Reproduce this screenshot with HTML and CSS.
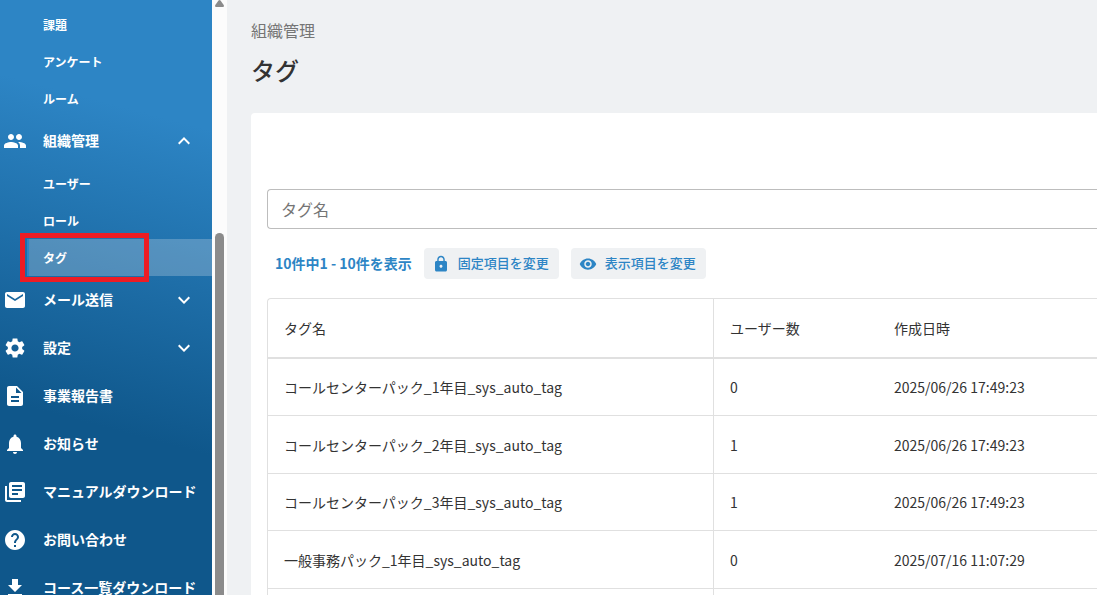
FILE: index.html
```html
<!DOCTYPE html>
<html lang="ja">
<head>
<meta charset="utf-8">
<meta name="viewport" content="width=device-width, initial-scale=1">
<title>タグ</title>
<link rel="stylesheet" href="styles.css">
</head>
<body>
<div class="layout">
  <nav class="sidebar">
    <ul class="menu">
      <li>
        <ul class="submenu">
          <li><a class="sub-link" href="#">課題</a></li>
          <li><a class="sub-link" href="#">アンケート</a></li>
          <li><a class="sub-link" href="#">ルーム</a></li>
        </ul>
      </li>
      <li>
        <button class="menu-link" type="button" aria-expanded="true">
          <svg class="icon" viewBox="0 0 24 24"><path d="M16 11c1.66 0 2.99-1.34 2.99-3S17.66 5 16 5c-1.66 0-3 1.34-3 3s1.34 3 3 3zm-8 0c1.66 0 2.99-1.34 2.99-3S9.66 5 8 5C6.34 5 5 6.34 5 8s1.34 3 3 3zm0 2c-2.33 0-7 1.17-7 3.5V19h14v-2.5c0-2.33-4.67-3.5-7-3.5zm8 0c-.29 0-.62.02-.97.05 1.16.84 1.97 1.97 1.97 3.45V19h6v-2.5c0-2.33-4.67-3.5-7-3.5z"/></svg>
          <span class="menu-label">組織管理</span>
          <svg class="icon" viewBox="0 0 24 24"><path d="M12 8l-6 6 1.41 1.41L12 10.83l4.59 4.58L18 14z"/></svg>
        </button>
        <ul class="submenu">
          <li><a class="sub-link" href="#">ユーザー</a></li>
          <li><a class="sub-link" href="#">ロール</a></li>
          <li class="current"><a class="sub-link sub-link-active" href="#" aria-current="page">タグ</a><span class="callout"></span></li>
        </ul>
      </li>
      <li>
        <button class="menu-link" type="button" aria-expanded="false">
          <svg class="icon" viewBox="0 0 24 24"><path d="M20 4H4c-1.1 0-1.99.9-1.99 2L2 18c0 1.1.9 2 2 2h16c1.1 0 2-.9 2-2V6c0-1.1-.9-2-2-2zm0 4l-8 5-8-5V6l8 5 8-5v2z"/></svg>
          <span class="menu-label">メール送信</span>
          <svg class="icon" viewBox="0 0 24 24"><path d="M16.59 8.59L12 13.17 7.41 8.59 6 10l6 6 6-6z"/></svg>
        </button>
      </li>
      <li>
        <button class="menu-link" type="button" aria-expanded="false">
          <svg class="icon" viewBox="0 0 24 24"><path d="M19.14 12.94c.04-.3.06-.61.06-.94 0-.32-.02-.64-.07-.94l2.03-1.58c.18-.14.23-.41.12-.61l-1.92-3.32c-.12-.22-.37-.29-.59-.22l-2.39.96c-.5-.38-1.03-.7-1.62-.94l-.36-2.54c-.04-.24-.24-.41-.48-.41h-3.84c-.24 0-.43.17-.47.41l-.36 2.54c-.59.24-1.13.57-1.62.94l-2.39-.96c-.22-.08-.47 0-.59.22L2.74 8.87c-.12.21-.08.47.12.61l2.03 1.58c-.05.3-.09.63-.09.94s.02.64.07.94l-2.03 1.58c-.18.14-.23.41-.12.61l1.92 3.32c.12.22.37.29.59.22l2.39-.96c.5.38 1.03.7 1.62.94l.36 2.54c.05.24.24.41.48.41h3.84c.24 0 .44-.17.47-.41l.36-2.54c.59-.24 1.13-.56 1.62-.94l2.39.96c.22.08.47 0 .59-.22l1.92-3.32c.12-.22.07-.47-.12-.61l-2.01-1.58zM12 15.6c-1.98 0-3.6-1.62-3.6-3.6s1.62-3.6 3.6-3.6 3.6 1.62 3.6 3.6-1.62 3.6-3.6 3.6z"/></svg>
          <span class="menu-label">設定</span>
          <svg class="icon" viewBox="0 0 24 24"><path d="M16.59 8.59L12 13.17 7.41 8.59 6 10l6 6 6-6z"/></svg>
        </button>
      </li>
      <li>
        <a class="menu-link" href="#">
          <svg class="icon" viewBox="0 0 24 24"><path d="M14 2H6c-1.1 0-1.99.9-1.99 2L4 20c0 1.1.89 2 1.99 2H18c1.1 0 2-.9 2-2V8l-6-6zm2 16H8v-2h8v2zm0-4H8v-2h8v2zm-3-5V3.500L18.500 9H13z"/></svg>
          <span class="menu-label">事業報告書</span>
        </a>
      </li>
      <li>
        <a class="menu-link" href="#">
          <svg class="icon" viewBox="0 0 24 24"><path d="M12 22c1.100 0 2-.9 2-2h-4c0 1.100.89 2 2 2zm6-6v-5c0-3.070-1.640-5.640-4.500-6.320V4c0-.83-.67-1.500-1.500-1.500s-1.500.67-1.500 1.500v.68C7.630 5.360 6 7.920 6 11v5l-2 2v1h16v-1l-2-2z"/></svg>
          <span class="menu-label">お知らせ</span>
        </a>
      </li>
      <li>
        <a class="menu-link" href="#">
          <svg class="icon" viewBox="0 0 24 24"><path d="M4 6H2v14c0 1.100.9 2 2 2h14v-2H4V6zm16-4H8c-1.100 0-2 .9-2 2v12c0 1.100.9 2 2 2h12c1.100 0 2-.9 2-2V4c0-1.100-.9-2-2-2zm-1 9H9V9h10v2zm-4 4H9v-2h6v2zm4-8H9V5h10v2z"/></svg>
          <span class="menu-label">マニュアルダウンロード</span>
        </a>
      </li>
      <li>
        <a class="menu-link" href="#">
          <svg class="icon" viewBox="0 0 24 24"><path d="M12 2C6.480 2 2 6.480 2 12s4.480 10 10 10 10-4.480 10-10S17.520 2 12 2zm1 17h-2v-2h2v2zm2.070-7.750l-.9.920C13.450 12.900 13 13.500 13 15h-2v-.5c0-1.100.45-2.100 1.170-2.830l1.240-1.260c.37-.36.59-.86.59-1.410 0-1.100-.9-2-2-2s-2 .9-2 2H8c0-2.210 1.790-4 4-4s4 1.790 4 4c0 .88-.36 1.680-.93 2.250z"/></svg>
          <span class="menu-label">お問い合わせ</span>
        </a>
      </li>
      <li>
        <a class="menu-link" href="#">
          <svg class="icon" viewBox="0 0 24 24"><path d="M19 9h-4V3H9v6H5l7 7 7-7zM5 18v2h14v-2H5z"/></svg>
          <span class="menu-label">コース一覧ダウンロード</span>
        </a>
      </li>
    </ul>
  </nav>
  <div class="scrollbar" aria-hidden="true">
    <svg class="scroll-arrow" viewBox="0 0 9 7"><path d="M3.500.6q1-1 2 0L8.700 5q.7 1.500-.7 2H1Q-.4 6.500.3 5z"/></svg>
    <span class="scroll-thumb"></span>
  </div>
  <main class="content">
    <p class="breadcrumb">組織管理</p>
    <h1 class="page-title">タグ</h1>
    <section class="card">
      <input class="search" type="text" placeholder="タグ名" aria-label="タグ名">
      <div class="toolbar">
        <span class="count">10件中1 - 10件を表示</span>
        <button class="chip" type="button">
          <svg class="chip-icon" viewBox="0 0 24 24"><path d="M18 8h-1V6c0-2.760-2.240-5-5-5S7 3.240 7 6v2H6c-1.100 0-2 .9-2 2v10c0 1.100.9 2 2 2h12c1.100 0 2-.9 2-2V10c0-1.100-.9-2-2-2zm-6 9c-1.100 0-2-.9-2-2s.9-2 2-2 2 .9 2 2-.9 2-2 2zm3.100-9H8.900V6c0-1.710 1.390-3.100 3.100-3.100 1.710 0 3.100 1.390 3.100 3.100v2z"/></svg>
          <span class="chip-label">固定項目を変更</span>
        </button>
        <button class="chip" type="button">
          <svg class="chip-icon" viewBox="0 0 24 24"><path d="M12 4.500C7 4.500 2.730 7.610 1 12c1.730 4.390 6 7.500 11 7.500s9.270-3.110 11-7.500c-1.730-4.390-6-7.500-11-7.500zM12 17c-2.760 0-5-2.240-5-5s2.240-5 5-5 5 2.240 5 5-2.240 5-5 5zm0-8c-1.660 0-3 1.340-3 3s1.340 3 3 3 3-1.340 3-3-1.340-3-3-3z"/></svg>
          <span class="chip-label">表示項目を変更</span>
        </button>
      </div>
      <div class="table-frame">
        <table class="tags">
          <colgroup><col class="col-name"><col class="col-users"><col></colgroup>
          <thead>
            <tr><th scope="col">タグ名</th><th scope="col">ユーザー数</th><th scope="col">作成日時</th></tr>
          </thead>
          <tbody>
            <tr><td>コールセンターパック_1年目_sys_auto_tag</td><td>0</td><td>2025/06/26 17:49:23</td></tr>
            <tr><td>コールセンターパック_2年目_sys_auto_tag</td><td>1</td><td>2025/06/26 17:49:23</td></tr>
            <tr><td>コールセンターパック_3年目_sys_auto_tag</td><td>1</td><td>2025/06/26 17:49:23</td></tr>
            <tr><td>一般事務パック_1年目_sys_auto_tag</td><td>0</td><td>2025/07/16 11:07:29</td></tr>
            <tr><td></td><td></td><td></td></tr>
          </tbody>
        </table>
      </div>
    </section>
  </main>
</div>
</body>
</html>
```
FILE: styles.css
```css
* {
  box-sizing: border-box;
}

body {
  margin: 0;
  font-family: "Noto Sans CJK JP", "Noto Sans", sans-serif;
  font-size: 14px;
  line-height: 20px;
  color: #333;
  background: #eff1f3;
}

ul {
  margin: 0;
  padding: 0;
  list-style: none;
}

button,
input {
  font: inherit;
}

.layout {
  display: flex;
  height: 100vh;
  overflow: hidden;
}

/* Sidebar */
.sidebar {
  flex: 0 0 212px;
  overflow: hidden;
  color: #fff;
  background: linear-gradient(195deg, #2d85c5 20%, #0f578b 70%);
}

.menu {
  padding-top: 6px;
}

.menu-link {
  display: flex;
  align-items: center;
  width: 100%;
  height: 48px;
  padding: 0 16px 0 3px;
  border: 0;
  background: none;
  color: inherit;
  font-weight: 600;
  text-align: left;
  text-decoration: none;
  white-space: nowrap;
}

.menu-label {
  flex: 1;
  margin-left: 16px;
  padding-bottom: 2px;
}

.icon {
  flex: none;
  width: 24px;
  height: 24px;
  fill: currentColor;
}

.sub-link {
  display: flex;
  align-items: center;
  height: 37px;
  margin-left: 27px;
  padding-left: 16px;
  color: inherit;
  font-size: 12px;
  font-weight: 600;
  text-decoration: none;
}

.current {
  position: relative;
}

.sub-link-active {
  padding-left: 14px;
  border-left: 2px solid #2d85c5;
  background: rgba(239, 241, 243, 0.25);
}

.callout {
  position: absolute;
  top: -6px;
  left: 20px;
  width: 129px;
  height: 49px;
  border: 5px solid #ed1c24;
  pointer-events: none;
}

/* Scrollbar */
.scrollbar {
  display: flex;
  flex: 0 0 15px;
  flex-direction: column;
  align-items: center;
  background: #fcfcfc;
}

.scroll-arrow {
  flex: none;
  width: 9px;
  height: 7px;
  fill: #8b8b8b;
}

.scroll-thumb {
  flex: 1;
  width: 9px;
  margin-top: 226px;
  border-radius: 5px 5px 0 0;
  background: #8b8b8b;
}

/* Content */
.content {
  display: flex;
  flex: 1;
  flex-direction: column;
  min-width: 0;
  padding: 18px 0 0 24px;
}

.breadcrumb {
  margin: 0;
  font-size: 16px;
  line-height: 24px;
  color: #757575;
}

.page-title {
  margin: 10px 0 25px;
  font-size: 24px;
  font-weight: 500;
  line-height: 36px;
}

.card {
  flex: 1;
  padding: 76px 0 0 16px;
  border-radius: 4px 0 0 0;
  background: #fff;
}

.search {
  display: block;
  width: 100%;
  height: 40px;
  padding: 0 13px;
  border: 1px solid #bdbdbd;
  border-right: 0;
  border-radius: 4px 0 0 4px;
  background: #fff;
  font-size: 16px;
}

.search::placeholder {
  color: #757575;
  opacity: 1;
}

.toolbar {
  display: flex;
  align-items: center;
  gap: 12px;
  padding: 19px 8px;
}

.count {
  padding-bottom: 2px;
  color: #2d85c5;
  font-weight: 700;
}

.chip {
  display: flex;
  align-items: center;
  gap: 8px;
  height: 31px;
  padding: 0 10px 0 8px;
  border: 0;
  border-radius: 4px;
  background: #eff1f3;
  color: #2d85c5;
  font-size: 13px;
  font-weight: 500;
}

.chip-label {
  padding-bottom: 2px;
}

.chip-icon {
  width: 18px;
  height: 18px;
  fill: currentColor;
}

/* Table */
.table-frame {
  border: 1px solid #e0e0e0;
  border-right: 0;
  border-radius: 4px 0 0 0;
}

.tags {
  width: 100%;
  border-collapse: separate;
  border-spacing: 0;
  table-layout: fixed;
}

.col-name {
  width: 446px;
}

.col-users {
  width: 164px;
}

.tags th,
.tags td {
  height: 57px;
  padding: 0 16px;
  border-bottom: 1px solid #e0e0e0;
  font-weight: 400;
  text-align: left;
}

.tags th {
  height: 60px;
  border-bottom-width: 2px;
}

.tags tr:nth-child(even) td {
  height: 58px;
}

.tags th:first-child,
.tags td:first-child {
  border-right: 1px solid #e0e0e0;
}
```
